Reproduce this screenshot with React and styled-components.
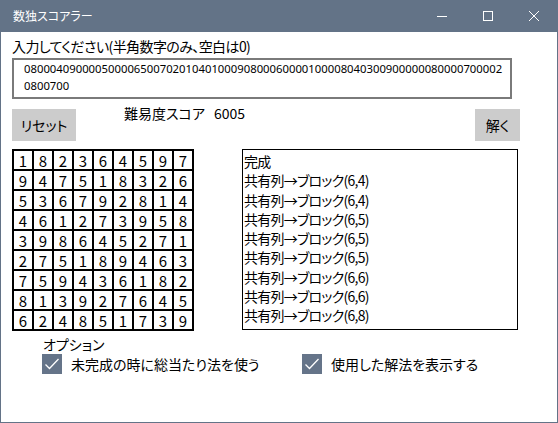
import React from "react";
import styled, { createGlobalStyle } from "styled-components";

const FRAME = "#637387";
const JP = `"Noto Sans CJK JP", "Noto Sans", sans-serif`;

const GlobalStyle = createGlobalStyle`
  html, body { margin: 0; padding: 0; background: #fff; }
  body { font-family: ${JP}; }
`;

const Window = styled.div`
  width: 558px;
  height: 423px;
  box-sizing: border-box;
  border: 1px solid ${FRAME};
  border-top: none;
  background: #fff;
  display: flex;
  flex-direction: column;
  overflow: hidden;
  color: #000;
  font-family: ${JP};
  font-feature-settings: "palt";
`;

const TitleBar = styled.div`
  height: 32px;
  flex-shrink: 0;
  background: ${FRAME};
  display: flex;
  align-items: center;
`;

const Title = styled.div`
  flex: 1;
  padding-left: 12px;
  color: #fff;
  font-size: 12px;
  line-height: 32px;
`;

const CaptionButton = styled.div`
  width: 46px;
  height: 32px;
  display: flex;
  align-items: center;
  justify-content: center;
`;

const Client = styled.div`
  display: flex;
  flex-direction: column;
  padding: 0 37px 0 11px;
`;

const FieldLabel = styled.div`
  margin-top: 4px;
  font-size: 14px;
  letter-spacing: -0.6px;
  line-height: 20px;
`;

const InputBox = styled.textarea`
  display: block;
  width: 500px;
  height: 41px;
  box-sizing: border-box;
  margin: 2px 0 0;
  padding: 0 10px;
  border: 2px solid #7a7a7a;
  font-family: "Noto Sans", sans-serif;
  font-size: 11.3px;
  line-height: 17px;
  color: #000;
  resize: none;
  overflow: hidden;
  white-space: pre;
  outline: none;
  background: #fff;
`;

const Toolbar = styled.div`
  display: flex;
  align-items: flex-start;
  height: 38px;
  margin-top: 4px;
`;

const ActionButton = styled.button`
  margin-top: 6px;
  width: ${(p) => p.$w}px;
  height: 32px;
  padding: 0;
  border: none;
  background: #cccccc;
  color: #000;
  font-family: ${JP};
  font-feature-settings: "palt";
  font-size: 14px;
`;

const Score = styled.div`
  margin-left: 48px;
  display: flex;
  gap: 9px;
  font-size: 14px;
  line-height: 20px;
`;

const Spacer = styled.div`
  flex: 1;
`;

const MainRow = styled.div`
  display: flex;
  align-items: flex-start;
  margin-top: 8px;
`;

const Board = styled.div`
  display: grid;
  grid-template-columns: repeat(9, 20px);
  grid-auto-rows: 20px;
  border: 1px solid #000;
`;

const Cell = styled.div`
  box-sizing: border-box;
  border: 1px solid #000;
  display: flex;
  align-items: center;
  justify-content: center;
  font-size: 15px;
  line-height: 1;
`;

const LogBox = styled.div`
  margin-left: 48px;
  width: 276px;
  height: 181px;
  box-sizing: border-box;
  border: 1px solid #000;
  padding: 2px 0 0 1px;
  overflow: hidden;
  font-size: 14px;
  letter-spacing: -0.75px;
  line-height: 19.3px;
`;

const OptionsTitle = styled.div`
  margin: 4px 0 0 42px;
  font-size: 14px;
  line-height: 19px;
`;

const OptionsRow = styled.div`
  display: flex;
  margin-left: 41px;
`;

const OptionItem = styled.div`
  display: flex;
  align-items: center;
  gap: 9px;
  width: ${(p) => (p.$w ? `${p.$w}px` : "auto")};
  height: 20px;
  font-size: 14px;
`;

const CheckBox = styled.div`
  width: 20px;
  height: 20px;
  background: #657489;
  display: flex;
  align-items: center;
  justify-content: center;
`;

const solution = [
  "182364597",
  "947518326",
  "536792814",
  "461273958",
  "398645271",
  "275189463",
  "759436182",
  "813927645",
  "624851739",
];

const puzzle =
  "08000409000050000650070201040100090800060000100008040300900000080000700002\n0800700";

const logLines = [
  "完成",
  "共有列→ブロック(6,4)",
  "共有列→ブロック(6,4)",
  "共有列→ブロック(6,5)",
  "共有列→ブロック(6,5)",
  "共有列→ブロック(6,5)",
  "共有列→ブロック(6,6)",
  "共有列→ブロック(6,6)",
  "共有列→ブロック(6,8)",
];

const Check = () => (
  <svg width="20" height="20" viewBox="0 0 20 20">
    <polyline points="3.5,10.5 7.5,14.5 16.5,5" fill="none" stroke="#fff" strokeWidth="1.3" />
  </svg>
);

export default function App() {
  return (
    <>
      <GlobalStyle />
      <Window>
        <TitleBar>
          <Title>数独スコアラー</Title>
          <CaptionButton>
            <svg width="10" height="10" viewBox="0 0 10 10">
              <line x1="0" y1="5.5" x2="10" y2="5.5" stroke="#fff" strokeWidth="1" />
            </svg>
          </CaptionButton>
          <CaptionButton>
            <svg width="10" height="10" viewBox="0 0 10 10">
              <rect x="0.5" y="0.5" width="9" height="9" fill="none" stroke="#fff" strokeWidth="1" />
            </svg>
          </CaptionButton>
          <CaptionButton>
            <svg width="10" height="10" viewBox="0 0 10 10">
              <path d="M0 0 L10 10 M10 0 L0 10" stroke="#fff" strokeWidth="1" />
            </svg>
          </CaptionButton>
        </TitleBar>
        <Client>
          <FieldLabel>入力してください(半角数字のみ、空白は0)</FieldLabel>
          <InputBox readOnly wrap="off" defaultValue={puzzle} />
          <Toolbar>
            <ActionButton $w={64}>リセット</ActionButton>
            <Score>
              <span>難易度スコア</span>
              <span>6005</span>
            </Score>
            <Spacer />
            <ActionButton $w={45}>解く</ActionButton>
          </Toolbar>
          <MainRow>
            <Board>
              {solution.map((row, r) =>
                row.split("").map((d, c) => <Cell key={`${r}-${c}`}>{d}</Cell>)
              )}
            </Board>
            <LogBox>
              {logLines.map((l, i) => (
                <div key={i}>{l}</div>
              ))}
            </LogBox>
          </MainRow>
        </Client>
        <OptionsTitle>オプション</OptionsTitle>
        <OptionsRow>
          <OptionItem $w={260}>
            <CheckBox>
              <Check />
            </CheckBox>
            <span>未完成の時に総当たり法を使う</span>
          </OptionItem>
          <OptionItem>
            <CheckBox>
              <Check />
            </CheckBox>
            <span>使用した解法を表示する</span>
          </OptionItem>
        </OptionsRow>
      </Window>
    </>
  );
}
